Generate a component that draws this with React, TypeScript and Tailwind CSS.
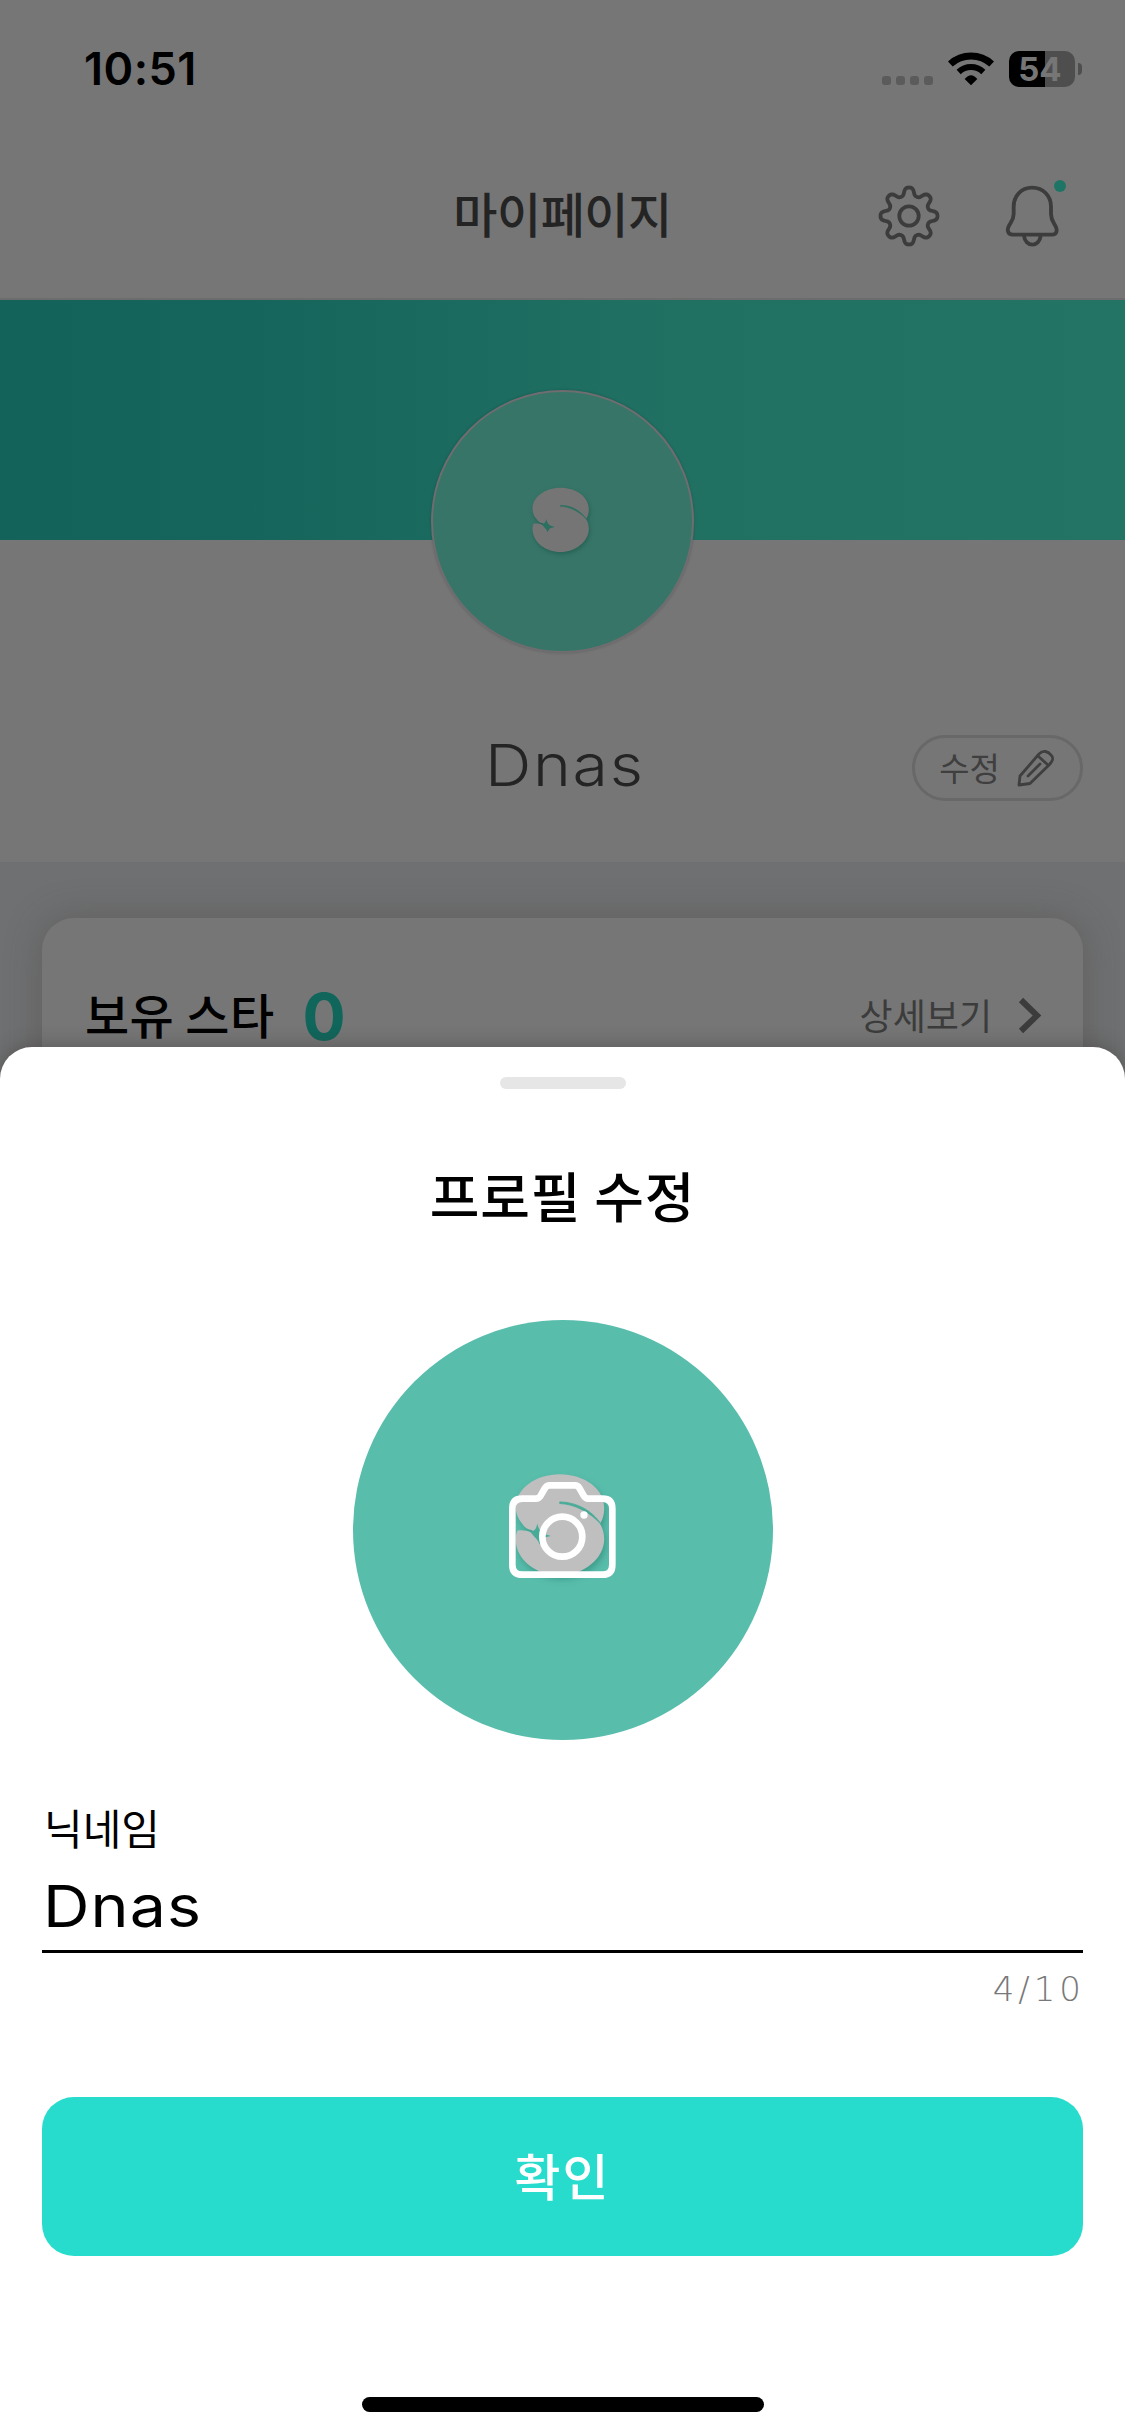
const KR = "font-['Noto_Sans_CJK_KR',sans-serif]";

const gearPath = (() => {
  const pts: string[] = [];
  for (let i = 0; i < 240; i++) {
    const t = (i / 240) * Math.PI * 2;
    const r = 24.6 + (3.9 * Math.tanh(1.5 * Math.cos(8 * t))) / Math.tanh(1.5);
    pts.push(`${(32 + r * Math.sin(t)).toFixed(2)} ${(32 - r * Math.cos(t)).toFixed(2)}`);
  }
  return `M${pts.join("L")}Z`;
})();

function Logo({ className, fill, cut }: { className: string; fill: string; cut: string }) {
  return (
    <svg viewBox="390 345 185 210" className={className}>
      <path
        d="M397 416C397 380 436 353 481 353C528 353 566 380 566 418C566 430 563 440 558 447C563 456 566 466 566 477C566 514 526 546 481 546C436 546 397 516 397 477C397 471 398 466 400 461C408 459 418 461 427 464L429 460C420 459 414 455 409 447C401 438 397 427 397 416Z"
        fill={fill}
      />
      <path d="M481 406C510 406 542 420 561 450C540 426 510 410 481 409Z" fill={cut} stroke={cut} strokeWidth="1.5" />
      <path d="M426 460C432 464 437 456 438 447C441 457 444 464 452 467L464 471L452 474C446 477 445 481 443 487C440 480 436 476 432 472C429 468 427 465 424 463Z" fill={cut} />
    </svg>
  );
}

function StatusBar() {
  return (
    <div className="flex h-[138px] items-start justify-between pt-[51px] pr-[43px] pl-[84px]">
      <div className="-mt-[9px] font-['Inter',sans-serif] text-[45px] leading-[54px] font-semibold tracking-[0.5px] text-black">10:51</div>
      <div className="flex h-9 items-center">
        <div className="mt-[23px] flex gap-[5px]">
          {[0, 1, 2, 3].map((i) => (
            <span key={i} className="size-[9px] rounded-[3px] bg-[#5b5b5b]" />
          ))}
        </div>
        <svg viewBox="444 153 138 108" className="ml-[15px] h-9 w-[46px]">
          <path d="M451 192A92 92 0 0 1 575 192" fill="none" stroke="#000" strokeWidth="21" />
          <path d="M476 216A54 54 0 0 1 550 216" fill="none" stroke="#000" strokeWidth="18" />
          <path d="M494 237Q513 214 532 237L513 256Z" />
        </svg>
        <div className="ml-[15px] flex h-9 w-[66px] items-center justify-center rounded-[10px] bg-[linear-gradient(90deg,#000_55%,#4e4e4e_55%)] font-['Inter',sans-serif] text-[33px] leading-9 font-bold text-[#767676]">
          <span className="-ml-1">54</span>
        </div>
        <span className="ml-[3px] h-3 w-1 rounded-r-full bg-[#4e4e4e]" />
      </div>
    </div>
  );
}

function Header() {
  return (
    <div className="grid h-[162px] grid-cols-[1fr_auto_1fr] items-center border-b-2 border-[#6c6c6c] pb-2">
      <span />
      <h1 className={`${KR} -mt-[4px] text-[48px] leading-[60px] font-medium tracking-[-0.5px] text-[#242424]`}>마이페이지</h1>
      <div className="flex items-center justify-end gap-[60px] pt-1 pr-[67px]">
        <svg viewBox="0 0 64 64" className="size-16" fill="none" stroke="#3c3c3c" strokeWidth="3.8">
          <path d={gearPath} strokeLinejoin="round" />
          <circle cx="32" cy="32" r="9.7" />
        </svg>
        <div className="relative -mr-[5px] h-16 w-[62px]">
          <svg viewBox="602 552 186 192" className="h-16 w-[62px]" fill="none" stroke="#3c3c3c" strokeWidth="11.5" strokeLinejoin="round">
            <path d="M695 563C662 563 640 589 640 620V642C640 660 632 667 626 677C619 689 622 704 637 704H755C770 704 772 689 765 677C759 667 752 660 752 642V620C752 589 730 563 695 563Z" />
            <path d="M671 708C673 724 684 734 696 734C708 734 719 724 721 708" />
          </svg>
          <span className="absolute -top-[4px] -right-[3px] size-3 rounded-full bg-[#1e7565]" />
        </div>
      </div>
    </div>
  );
}

function PageBehind() {
  return (
    <div className="h-[1100px] overflow-hidden bg-[#767676]">
      <StatusBar />
      <Header />
      <div className="flex h-[240px] justify-center bg-[linear-gradient(90deg,#14635b_0%,#16655c_22%,#1b6b60_42%,#217163_62%,#237465_100%)] pt-[90px]">
        <div className="flex size-[263px] shrink-0 items-center justify-center rounded-full border-[2.5px] border-[#6f6d70] bg-[#377568] pr-[3px] shadow-[0_0_3px_rgba(0,0,0,0.18)]">
          <Logo className="-mt-[4px] h-[70px] w-[62px] drop-shadow-[1px_2px_2px_rgba(25,85,70,0.6)]" fill="#767576" cut="#2b7060" />
        </div>
      </div>
      <div className="grid h-[322px] grid-cols-[1fr_auto_1fr] items-start pt-[134px]">
        <span />
        <h2 className="mt-[47px] ml-1 scale-x-[1.11] font-['Inter',sans-serif] text-[58px] leading-[88px] font-light tracking-[1.5px] text-[#242424]">Dnas</h2>
        <div className="mt-[61px] mr-[42px] ml-auto flex h-[66px] w-[171px] items-center justify-center gap-[15px] rounded-full border-[3px] border-[#686868]">
          <span className={`${KR} -mt-[3px] text-[33px] leading-[36px] text-[#3f3f3f]`}>수정</span>
          <svg viewBox="0 0 41 41" className="size-[41px]" fill="none" stroke="#3f3f3f" strokeWidth="2.8" strokeLinejoin="round">
            <path d="M4 37L5 28L24 6C28 2 33 3 36 7C39 10 38 13 34 17L15 35.5Z" />
            <path d="M23 8L33 17M13 28L25 16" strokeLinecap="round" />
          </svg>
        </div>
      </div>
      <div className="h-[240px] bg-[#6e7071] px-[42px] pt-14">
        <div className="flex h-[300px] items-start justify-between rounded-[32px] bg-[#767676] pt-[65px] pr-[40px] pl-[43px] shadow-[0_0_36px_rgba(80,70,70,0.4)]">
          <div className="flex items-center">
            <span className={`${KR} -mt-[8px] text-[48px] leading-[66px] font-medium tracking-[0.4px] text-black`}>보유 스타</span>
            <span className="mt-[1px] ml-[28px] font-['Inter',sans-serif] text-[64px] leading-[66px] font-bold text-[#10665b]">0</span>
          </div>
          <div className="flex h-[64px] items-center">
            <span className={`${KR} -mt-[3px] text-[36px] leading-[54px] text-[#3c3c3c]`}>상세보기</span>
            <svg viewBox="0 0 26 38" className="ml-[25px] h-[38px] w-[26px]" fill="none" stroke="#3c3c3c" strokeWidth="6">
              <path d="M4 4L20 19.5L4 35" />
            </svg>
          </div>
        </div>
      </div>
    </div>
  );
}

function CameraIcon() {
  return (
    <svg viewBox="144 120 327 300" className="absolute top-[160px] left-[155px] h-[100px] w-[109px]" fill="none" stroke="#fff" strokeWidth="20" strokeLinejoin="round">
      <path d="M187 176H228Q237 176 242 167L255 144Q260 136 269 136H345Q354 136 358 144L371 167Q376 176 385 176H427Q457 176 457 206V374Q457 404 427 404H187Q157 404 157 374V206Q157 176 187 176Z" />
      <circle cx="307" cy="290" r="60" />
      <circle cx="372" cy="225" r="11" fill="#fff" stroke="none" />
    </svg>
  );
}

function EditSheet() {
  return (
    <div className="absolute inset-x-0 bottom-0 flex h-[1389px] flex-col items-center rounded-t-[32px] bg-white px-[42px] shadow-[0_0_20px_rgba(60,50,50,0.45)]">
      <div className="mt-[30px] h-3 w-[126px] shrink-0 rounded-full bg-[#e6e6e6]" />
      <h2 className={`${KR} mt-[66px] text-[54px] leading-[80px] font-medium tracking-[0.8px] text-black`}>프로필 수정</h2>
      <div className="relative mt-[85px] flex size-[420px] shrink-0 items-center justify-center rounded-full bg-[#59bdac]">
        <Logo className="-mt-[11px] mr-[5px] h-[110px] w-[97px] drop-shadow-[2px_4px_3px_rgba(35,125,105,0.5)]" fill="#bfbfbf" cut="#48ab98" />
        <CameraIcon />
      </div>
      <label className="mt-[57px] flex w-full flex-col border-b-[3px] border-black">
        <span className={`${KR} ml-[2px] text-[42px] leading-[60px] text-black`}>닉네임</span>
        <span className="mt-[1px] -mb-[4px] ml-[1px] origin-left scale-x-[1.11] font-['Inter',sans-serif] text-[58px] leading-[96px] tracking-[1px] text-black">Dnas</span>
      </label>
      <div className="mt-[12px] -mr-[4px] w-full text-right font-['DejaVu_Sans',sans-serif] text-[34px] leading-[48px] font-extralight tracking-[4px] text-[#787878]">4/10</div>
      <button className={`${KR} mt-[84px] h-[159px] w-full shrink-0 rounded-[32px] bg-[#27dccc] pb-[6px] text-[50px] leading-[74px] font-medium tracking-[2px] text-white`}>확인</button>
      <div className="mt-auto mb-6 h-[15px] w-[402px] shrink-0 rounded-full bg-black" />
    </div>
  );
}

export default function App() {
  return (
    <div className="relative h-[2436px] w-[1125px] overflow-hidden bg-white">
      <PageBehind />
      <EditSheet />
    </div>
  );
}
